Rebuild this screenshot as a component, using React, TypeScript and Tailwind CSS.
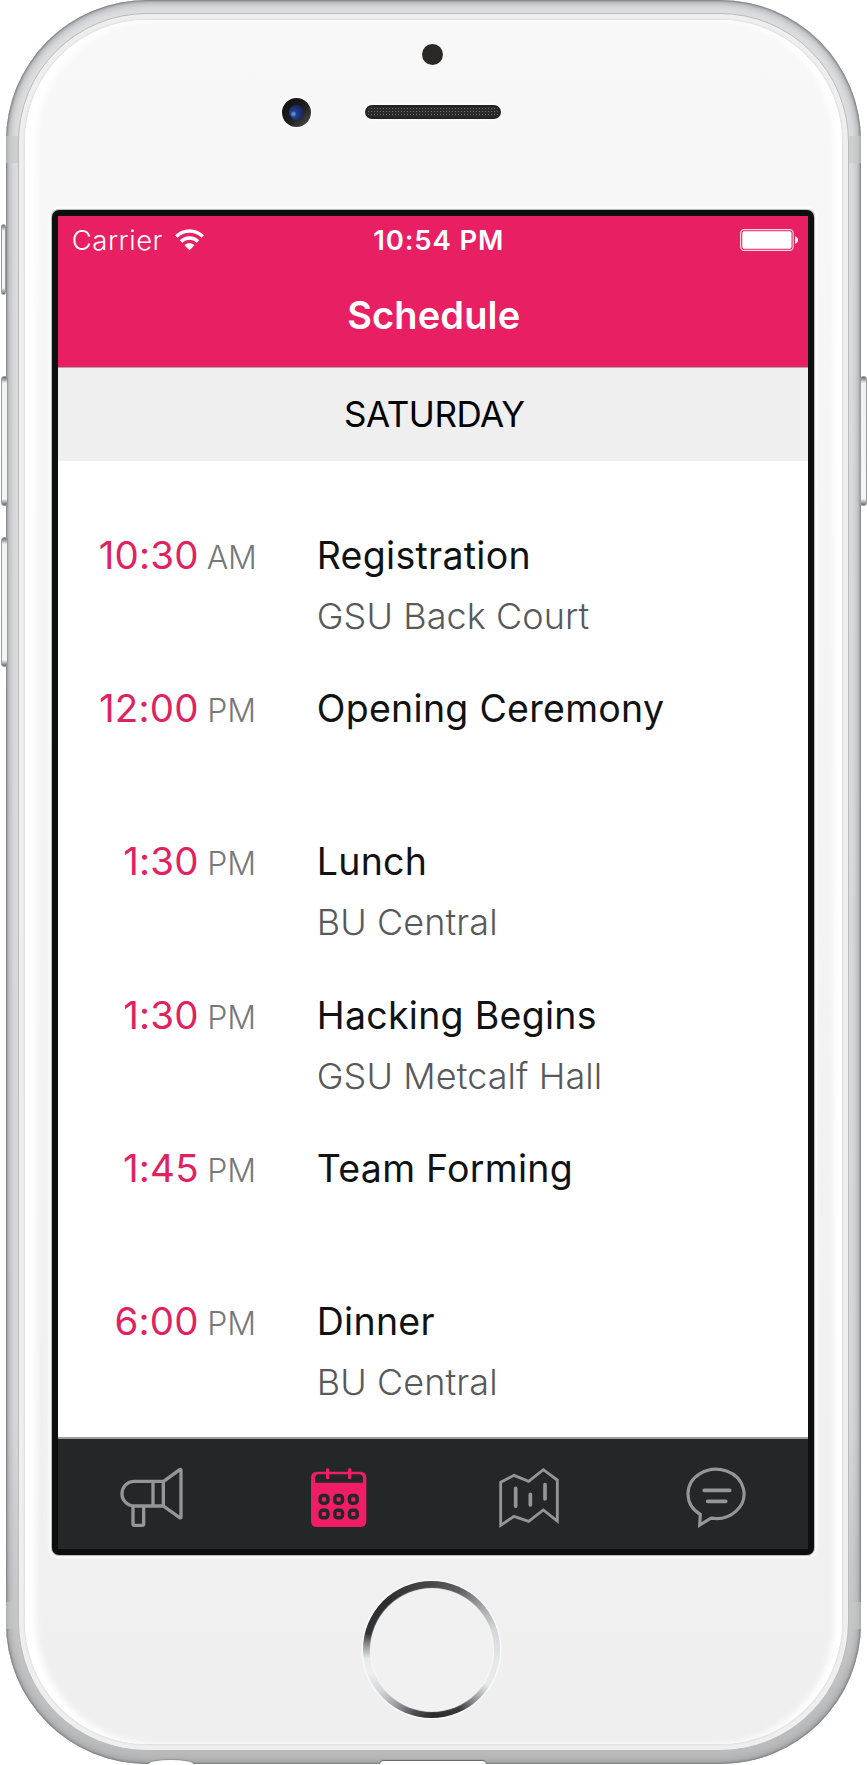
import type { ReactNode } from "react";

type Session = { time: string; period: "AM" | "PM"; title: string; place?: string };

const sessions: Session[] = [
  { time: "10:30", period: "AM", title: "Registration", place: "GSU Back Court" },
  { time: "12:00", period: "PM", title: "Opening Ceremony" },
  { time: "1:30", period: "PM", title: "Lunch", place: "BU Central" },
  { time: "1:30", period: "PM", title: "Hacking Begins", place: "GSU Metcalf Hall" },
  { time: "1:45", period: "PM", title: "Team Forming" },
  { time: "6:00", period: "PM", title: "Dinner", place: "BU Central" },
];

function WifiIcon() {
  return (
    <svg className="h-[22px] w-[29px]" viewBox="0 0 29 22" fill="none" stroke="white" strokeWidth="3.5">
      <path d="M1.3 7.6C8.6.2 20.4.2 27.7 7.6" />
      <path d="M6 12.4c4.8-4.7 12.2-4.7 17 0" />
      <path d="M14.5 21.2l-5-5c2.9-2.5 7.1-2.5 10 0z" fill="white" stroke="none" />
    </svg>
  );
}

function BatteryIcon() {
  return (
    <svg className="h-[22px] w-[58px]" viewBox="0 0 58 22">
      <rect x="0.6" y="0.6" width="52.6" height="20.8" rx="3.6" fill="none" stroke="#ffd9e6" strokeWidth="1.2" />
      <rect x="2.3" y="2.3" width="49.2" height="17.4" rx="1.8" fill="white" />
      <path d="M55 7.2c4 .8 4 6.8 0 7.6z" fill="white" />
    </svg>
  );
}

function MegaphoneIcon() {
  return (
    <svg className="h-[62px] w-[64px]" viewBox="0 0 192 186" fill="none" stroke="#949698" strokeWidth="10" strokeLinejoin="round">
      <path d="M131 43H43a37 37 0 0 0 0 74h88" />
      <path d="M99 43v74M130 43v74" />
      <path d="M130 44l49-36q4-2 4 2v140q0 4-4 2l-49-35" />
      <path d="M39 117v54q0 4 4 4h24q4 0 4-4v-54" />
    </svg>
  );
}

function CalendarIcon() {
  return (
    <svg className="h-[62px] w-[64px]" viewBox="0 0 192 186">
      <path
        fill="#f01c66"
        fillRule="evenodd"
        d="M30 14h130q18 0 18 18v130q0 18-18 18H30q-18 0-18-18V32q0-18 18-18zM36 22q-12 0-12 12v13h144V34q0-12-12-12z"
      />
      <path d="M62 8v24M128 8v24" stroke="#f01c66" strokeWidth="10" strokeLinecap="round" />
      <g fill="none" stroke="#24272a" strokeWidth="10.5">
        {[97, 141].map((y) =>
          [51, 95, 139].map((x) => <rect key={`${x}-${y}`} x={x - 11.5} y={y - 11.5} width="23" height="23" rx="8" />)
        )}
      </g>
    </svg>
  );
}

function MapIcon() {
  return (
    <svg className="h-[62px] w-[64px]" viewBox="0 0 192 186" fill="none" stroke="#939597" strokeWidth="8.5">
      <path d="M17 46L57 25l44 18 44-35 42 31v123l-42-33-44 34-44-15-40 27z" />
      <path d="M62 64v54M106 82v32M150 53v43" strokeWidth="11" strokeLinecap="round" />
    </svg>
  );
}

function ChatIcon() {
  return (
    <svg className="h-[62px] w-[64px] overflow-visible" viewBox="0 0 192 186" fill="none" stroke="#949698" strokeWidth="9.5">
      <path d="M55 142A84 74 0 1 1 87 153.500L53 174z" />
      <path d="M67 70h76M77 103h54" strokeWidth="11.5" strokeLinecap="round" />
    </svg>
  );
}

function StatusBar() {
  return (
    <div className="grid h-12 grid-cols-3 items-center pr-[10px] pl-[14px] text-[27.5px] leading-[48px] text-white">
      <div className="flex items-center gap-[12px]">
        <span className="font-[360] tracking-[0.5px]">Carrier</span>
        <WifiIcon />
      </div>
      <div className="pl-[8px] text-center font-semibold tracking-[0.85px] whitespace-nowrap">10:54 PM</div>
      <div className="flex justify-end">
        <BatteryIcon />
      </div>
    </div>
  );
}

function SessionRow({ time, period, title, place }: Session) {
  return (
    <li className="flex h-[153.2px] leading-[60px]">
      <div className="-mt-px flex w-[198px] items-baseline justify-end gap-[8px]">
        <span className="text-[38.5px] tracking-[0.2px] text-[#e0235f]">{time}</span>
        <span className="w-[49px] text-right text-[32px] font-light tracking-[-0.2px] text-[#77787a]">{period}</span>
      </div>
      <div className="pl-[61px] whitespace-nowrap">
        <div className="text-[37.5px] tracking-[0.28px] text-[#111213]">{title}</div>
        {place && <div className="text-[36px] font-light tracking-[0.08px] text-[#58595b]">{place}</div>}
      </div>
    </li>
  );
}

function Tab({ children }: { children: ReactNode }) {
  return <button className="flex flex-1 justify-center pt-[28px]">{children}</button>;
}

function Screen() {
  return (
    <div className="mr-[1.5px] flex h-[1345px] w-[762px] flex-col rounded-[7px] border-[6px] border-[#0d0e0e] bg-white shadow-[0_0_1px_1px_#b5b7b7,0_0_3px_3px_#ffffff]">
      <header className="h-[151px] shrink-0 bg-[#e91f63]">
        <StatusBar />
        <h1 className="h-[103px] pt-px pl-[2px] text-center text-[38px] leading-[101px] font-semibold tracking-[0.15px] text-white">Schedule</h1>
      </header>
      <h2 className="h-[94px] shrink-0 border-t border-[#a9abab] bg-[#efefef] pl-[3px] text-center text-[35px] leading-[93px] tracking-[-0.45px] text-black">
        SATURDAY
      </h2>
      <ul className="min-h-0 flex-1 overflow-hidden pt-[65px]">
        {sessions.map((s) => (
          <SessionRow key={s.time + s.title} {...s} />
        ))}
      </ul>
      <nav className="flex h-[112px] shrink-0 border-t-2 border-[#999b9c] bg-[#24272a]">
        <Tab><MegaphoneIcon /></Tab>
        <Tab><CalendarIcon /></Tab>
        <Tab><MapIcon /></Tab>
        <Tab><ChatIcon /></Tab>
      </nav>
    </div>
  );
}

function Speakers() {
  return (
    <div className="relative h-[190px] w-full">
      <div className="absolute top-[24px] left-[397px] size-[21px] rounded-full bg-[#2b2725]" />
      <div className="absolute top-[78px] left-[257px] flex size-[29px] items-center justify-center rounded-full bg-linear-to-br from-[#111] via-[#1c1c1c] to-[#555] shadow-[0_0_2px_1px_#fff]">
        <div className="size-[15px] rounded-full bg-[radial-gradient(circle_at_30%_60%,#5b8fdc_0_8%,#24408c_22%,#182c66_60%,#121b38)]" />
      </div>
      <div className="absolute top-[85px] left-[340px] h-[14px] w-[136px] rounded-full border-2 border-[#222] bg-[#2a2a2a] bg-[radial-gradient(#696969_0.7px,transparent_1px)] bg-[size:3px_3px] shadow-[0_0_2px_1px_#fff]" />
    </div>
  );
}

function HomeButton() {
  return (
    <div className="mt-[26px] mr-[4px] size-[137px] rounded-full bg-[conic-gradient(#47494b,#5c5e61_25deg,#a4a6a9_50deg,#d3d5d8_72deg,#e6e8e8_100deg,#e8eaea_122deg,#9b9da0_138deg,#38393b_155deg,#292a2c_178deg,#4b4d50_195deg,#a4a6a9_215deg,#d3d5d7_230deg,#eef0f0_250deg,#e9eaea_262deg,#909193_274deg,#333436_284deg,#2b2c2e_315deg,#47494b)] p-[7.5px] shadow-[0_0_2px_1px_#fff]">
      <div className="size-full rounded-full bg-[#f1f1f1] shadow-[0_0_1px_1px_#fafafa]" />
    </div>
  );
}

function Band({ className }: { className: string }) {
  return <div className={`absolute h-[27px] w-[12px] bg-[#c6c6c5] opacity-60 ${className}`} />;
}

function SideButton({ className }: { className: string }) {
  return (
    <div
      className={`absolute rounded-[3px] border border-[#9a9c9e] bg-[linear-gradient(#66686a,#f1f2f2_6px,#f4f5f5_calc(100%-6px),#66686a)] ${className}`}
    />
  );
}

export default function App() {
  return (
    <div className="relative h-[1765px] w-[867px] overflow-hidden bg-white font-['Inter','Liberation_Sans',sans-serif]">
      <div className="relative ml-[6px] h-[1764px] w-[855px] rounded-[141px] bg-linear-to-b from-[#dcdee0] via-[#d9dadc] via-80% to-[#b8babb] px-[12px] pt-[13px] pb-[13px] shadow-[inset_0_0_2px_1px_#7c7f82,inset_0_0_9px_2px_#96999c]">
        <div className="h-full rounded-[129px] border border-[#b9bbbd] bg-[#efefef] px-[6px] py-[6px]">
          <div className="h-full rounded-[122px] bg-linear-to-b from-[#f8f8f8] to-[#efefef] shadow-[0_0_2px_1px_#dddede,inset_12px_0_7px_-1px_#ffffff,inset_-10px_0_7px_-2px_#ffffff]">
            <div className="flex h-full flex-col items-center">
              <Speakers />
              <Screen />
              <HomeButton />
            </div>
          </div>
        </div>
        <Band className="top-[136px] left-0" />
        <Band className="top-[136px] right-0" />
        <Band className="top-[1602px] left-0" />
        <Band className="top-[1602px] right-0" />
      </div>
      <SideButton className="top-[224px] left-[1px] h-[71px] w-[5px]" />
      <SideButton className="top-[376px] left-[1px] h-[130px] w-[7px]" />
      <SideButton className="top-[537px] left-[1px] h-[130px] w-[7px]" />
      <SideButton className="top-[376px] left-[860px] h-[130px] w-[7px]" />
      <div className="absolute top-[1760px] left-[149px] h-[8px] w-[44px] rounded-[50%] bg-white shadow-[0_-1px_1px_#929496]" />
      <div className="absolute top-[1761px] left-[380px] h-[8px] w-[106px] rounded-[8px] bg-white shadow-[0_-1px_1px_#626466]" />
    </div>
  );
}
